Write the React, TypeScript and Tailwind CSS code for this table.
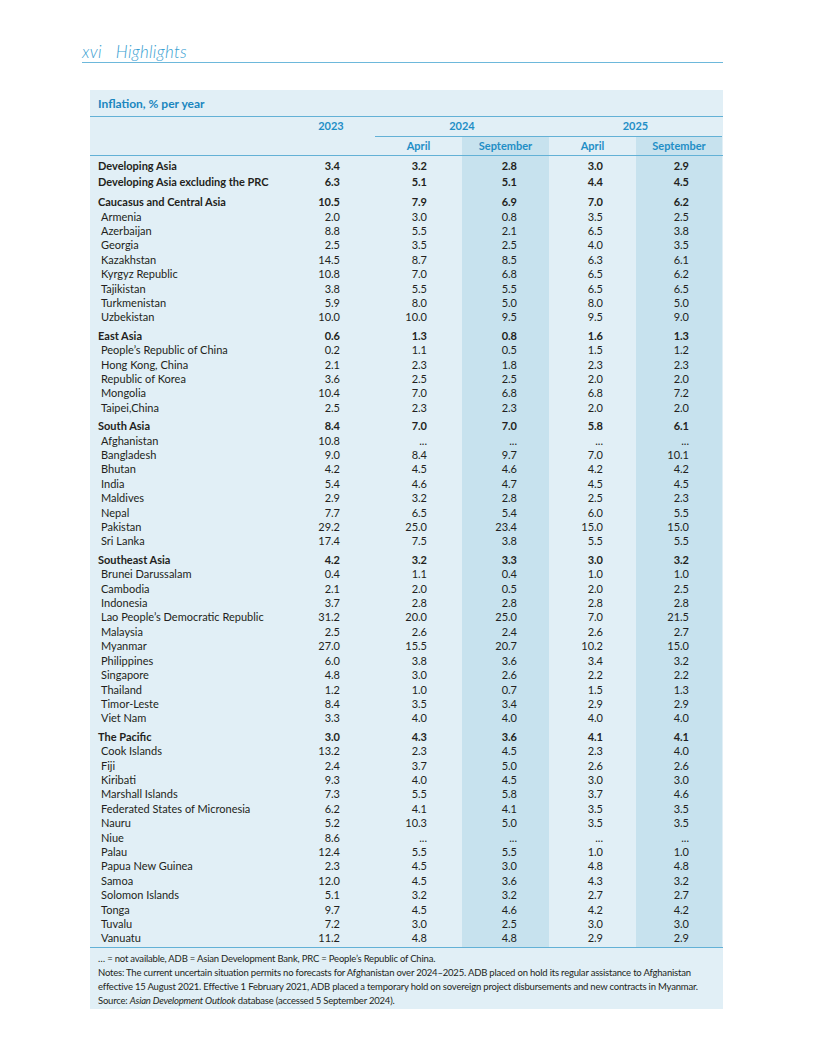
import React from "react";

type Row = { name: string; v: string[]; bold?: boolean };
type Group = Row[];

const top: Row[] = [
  { name: "Developing Asia", v: ["3.4", "3.2", "2.8", "3.0", "2.9"], bold: true },
  { name: "Developing Asia excluding the PRC", v: ["6.3", "5.1", "5.1", "4.4", "4.5"], bold: true },
];

const groups: Group[] = [
  [
    { name: "Caucasus and Central Asia", v: ["10.5", "7.9", "6.9", "7.0", "6.2"], bold: true },
    { name: "Armenia", v: ["2.0", "3.0", "0.8", "3.5", "2.5"] },
    { name: "Azerbaijan", v: ["8.8", "5.5", "2.1", "6.5", "3.8"] },
    { name: "Georgia", v: ["2.5", "3.5", "2.5", "4.0", "3.5"] },
    { name: "Kazakhstan", v: ["14.5", "8.7", "8.5", "6.3", "6.1"] },
    { name: "Kyrgyz Republic", v: ["10.8", "7.0", "6.8", "6.5", "6.2"] },
    { name: "Tajikistan", v: ["3.8", "5.5", "5.5", "6.5", "6.5"] },
    { name: "Turkmenistan", v: ["5.9", "8.0", "5.0", "8.0", "5.0"] },
    { name: "Uzbekistan", v: ["10.0", "10.0", "9.5", "9.5", "9.0"] },
  ],
  [
    { name: "East Asia", v: ["0.6", "1.3", "0.8", "1.6", "1.3"], bold: true },
    { name: "People\u2019s Republic of China", v: ["0.2", "1.1", "0.5", "1.5", "1.2"] },
    { name: "Hong Kong, China", v: ["2.1", "2.3", "1.8", "2.3", "2.3"] },
    { name: "Republic of Korea", v: ["3.6", "2.5", "2.5", "2.0", "2.0"] },
    { name: "Mongolia", v: ["10.4", "7.0", "6.8", "6.8", "7.2"] },
    { name: "Taipei,China", v: ["2.5", "2.3", "2.3", "2.0", "2.0"] },
  ],
  [
    { name: "South Asia", v: ["8.4", "7.0", "7.0", "5.8", "6.1"], bold: true },
    { name: "Afghanistan", v: ["10.8", "...", "...", "...", "..."] },
    { name: "Bangladesh", v: ["9.0", "8.4", "9.7", "7.0", "10.1"] },
    { name: "Bhutan", v: ["4.2", "4.5", "4.6", "4.2", "4.2"] },
    { name: "India", v: ["5.4", "4.6", "4.7", "4.5", "4.5"] },
    { name: "Maldives", v: ["2.9", "3.2", "2.8", "2.5", "2.3"] },
    { name: "Nepal", v: ["7.7", "6.5", "5.4", "6.0", "5.5"] },
    { name: "Pakistan", v: ["29.2", "25.0", "23.4", "15.0", "15.0"] },
    { name: "Sri Lanka", v: ["17.4", "7.5", "3.8", "5.5", "5.5"] },
  ],
  [
    { name: "Southeast Asia", v: ["4.2", "3.2", "3.3", "3.0", "3.2"], bold: true },
    { name: "Brunei Darussalam", v: ["0.4", "1.1", "0.4", "1.0", "1.0"] },
    { name: "Cambodia", v: ["2.1", "2.0", "0.5", "2.0", "2.5"] },
    { name: "Indonesia", v: ["3.7", "2.8", "2.8", "2.8", "2.8"] },
    { name: "Lao People\u2019s Democratic Republic", v: ["31.2", "20.0", "25.0", "7.0", "21.5"] },
    { name: "Malaysia", v: ["2.5", "2.6", "2.4", "2.6", "2.7"] },
    { name: "Myanmar", v: ["27.0", "15.5", "20.7", "10.2", "15.0"] },
    { name: "Philippines", v: ["6.0", "3.8", "3.6", "3.4", "3.2"] },
    { name: "Singapore", v: ["4.8", "3.0", "2.6", "2.2", "2.2"] },
    { name: "Thailand", v: ["1.2", "1.0", "0.7", "1.5", "1.3"] },
    { name: "Timor-Leste", v: ["8.4", "3.5", "3.4", "2.9", "2.9"] },
    { name: "Viet Nam", v: ["3.3", "4.0", "4.0", "4.0", "4.0"] },
  ],
  [
    { name: "The Pacific", v: ["3.0", "4.3", "3.6", "4.1", "4.1"], bold: true },
    { name: "Cook Islands", v: ["13.2", "2.3", "4.5", "2.3", "4.0"] },
    { name: "Fiji", v: ["2.4", "3.7", "5.0", "2.6", "2.6"] },
    { name: "Kiribati", v: ["9.3", "4.0", "4.5", "3.0", "3.0"] },
    { name: "Marshall Islands", v: ["7.3", "5.5", "5.8", "3.7", "4.6"] },
    { name: "Federated States of Micronesia", v: ["6.2", "4.1", "4.1", "3.5", "3.5"] },
    { name: "Nauru", v: ["5.2", "10.3", "5.0", "3.5", "3.5"] },
    { name: "Niue", v: ["8.6", "...", "...", "...", "..."] },
    { name: "Palau", v: ["12.4", "5.5", "5.5", "1.0", "1.0"] },
    { name: "Papua New Guinea", v: ["2.3", "4.5", "3.0", "4.8", "4.8"] },
    { name: "Samoa", v: ["12.0", "4.5", "3.6", "4.3", "3.2"] },
    { name: "Solomon Islands", v: ["5.1", "3.2", "3.2", "2.7", "2.7"] },
    { name: "Tonga", v: ["9.7", "4.5", "4.6", "4.2", "4.2"] },
    { name: "Tuvalu", v: ["7.2", "3.0", "2.5", "3.0", "3.0"] },
    { name: "Vanuatu", v: ["11.2", "4.8", "4.8", "2.9", "2.9"] },
  ],
];

const GRID = "grid grid-cols-[197px_88px_87px_87px_87px_86px]";
const HL = "bg-[#c7e2ee]";
const PR = ["pr-[35px]", "pr-[35px]", "pr-[32px]", "pr-[33px]", "pr-[33px]"];
const isHL = (i: number) => i === 2 || i === 4;

function DataRow({ row, pt }: { row: Row; pt: string }) {
  const w = row.bold ? "font-bold" : "font-normal";
  return (
    <div className={`${GRID} ${w} text-[11px] leading-[14.4px] text-[#231f20]`}>
      <div className={`${pt} ${row.bold ? "pl-[8px]" : "pl-[11px]"} whitespace-nowrap`}>{row.name}</div>
      {row.v.map((val, i) => (
        <div key={i} className={`${pt} text-right ${PR[i]} ${isHL(i) ? HL : ""}`}>
          {val}
        </div>
      ))}
    </div>
  );
}

export default function App() {
  return (
    <div className="w-[816px] h-[1056px] bg-white font-['Lato',sans-serif] text-[#231f20]">
      <div className="pt-[42px] pl-[82px] w-[723px]">
        <div className="flex items-baseline gap-[14px] italic font-light text-[17px] leading-[19px] tracking-[0.3px] text-[#3a9fd2] pb-[1px]">
          <span>xvi</span>
          <span>Highlights</span>
        </div>
        <div className="h-[1px] bg-[#6db8db]" />
      </div>

      <div className="mt-[27px] ml-[90px] w-[633px] bg-[#e1eff6]">
        <div className="h-[26px] flex items-center pl-[8px] pt-[2px] text-[12px] font-bold text-[#1a86bf]">
          Inflation, % per year
        </div>
        <div className="h-[1px] bg-[#63b1d6]" />
        <div className={`${GRID} text-[11px] font-bold text-[#1f8ec6] h-[19px] items-center`}>
          <div />
          <div className="text-center">2023</div>
          <div className="col-span-2 text-center">2024</div>
          <div className="col-span-2 text-center">2025</div>
        </div>
        <div className={GRID}>
          <div className="col-span-2" />
          <div className="col-span-4 h-[1px] bg-[#63b1d6]" />
        </div>
        <div className={`${GRID} text-[11px] font-bold text-[#1f8ec6] h-[18px]`}>
          <div />
          <div />
          <div className="flex items-center justify-center">April</div>
          <div className={`flex items-center justify-center ${HL}`}>September</div>
          <div className="flex items-center justify-center">April</div>
          <div className={`flex items-center justify-center ${HL}`}>September</div>
        </div>
        <div className="h-[1px] bg-[#63b1d6]" />
        <DataRow row={top[0]} pt="pt-[2.5px]" />
        <DataRow row={top[1]} pt="pt-[2.2px]" />
        {groups.map((g, gi) =>
          g.map((r, ri) => (
            <DataRow key={`${gi}-${ri}`} row={r} pt={ri === 0 ? (gi === 0 ? "pt-[5.6px]" : "pt-[4px]") : "pt-0"} />
          ))
        )}
        <div className={GRID}>
          <div className="h-[1px]" />
          <div />
          <div />
          <div className={HL} />
          <div />
          <div className={HL} />
        </div>
        <div className="h-[1px] bg-[#63b1d6]" />
        <div className="pl-[8px] pr-0 pt-[4px] pb-[1px] text-[9.5px] leading-[14px] tracking-[-0.2px] text-[#231f20]">
          <p>&hellip; = not available, ADB = Asian Development Bank, PRC = People&rsquo;s Republic of China.</p>
          <p>
            Notes: The current uncertain situation permits no forecasts for Afghanistan over 2024&ndash;2025. ADB placed on hold its regular assistance to Afghanistan effective 15 August 2021. Effective 1 February 2021, ADB placed a temporary hold on sovereign project disbursements and new contracts in Myanmar.
          </p>
          <p>
            Source: <i>Asian Development Outlook</i> database (accessed 5 September 2024).
          </p>
        </div>
      </div>
    </div>
  );
}
